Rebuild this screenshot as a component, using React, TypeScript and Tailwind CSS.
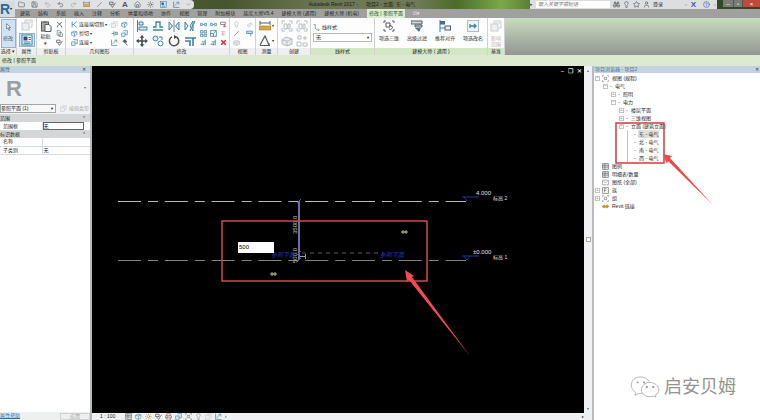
import type { ReactNode } from 'react';
import {
  Binoculars,
  ChevronDown,
  CircleHelp,
  Folder,
  House,
  Lightbulb,
  Printer,
  Redo2,
  Save,
  Star,
  Sun,
  Undo2,
  User,
} from 'lucide-react';

const BLUE = '#3f7fa8';
const DARK = '#555b60';
const PALE = '#c9cccf';

// Ribbon glyphs, all drawn on a 12 x 12 grid
const glyphs: Record<string, ReactNode> = {
  cursor: <path d="M4 1v8l2-2 1.500 4 1.500-.7L7.400 6.800H10z" fill="#fff" stroke={DARK} />,
  props: (
    <>
      <rect x="1" y="1" width="10" height="10" fill="#fff" stroke={BLUE} />
      <rect x="2.500" y="2.500" width="4" height="4" fill="#2d4a66" />
      <path d="M7.500 3.500h2.500M7.500 5.500h2.500M2.500 8h7M2.500 9.700h7" stroke={BLUE} />
    </>
  ),
  type: (
    <>
      <rect x="1" y="4" width="7" height="7" fill="#eceef0" stroke={PALE} />
      <path d="M4 4V1h7v7H8M6 2v2M9 2v2" fill="none" stroke={PALE} />
    </>
  ),
  clipboard: (
    <>
      <rect x="1.500" y="2" width="7" height="9" fill="#a8a89c" stroke={DARK} />
      <rect x="3.500" y="1" width="3" height="2" fill="#777" />
      <path d="M5 4.500h4l2 2v5H5z" fill="#fff" stroke={DARK} />
    </>
  ),
  cut: <path d="M2 2l8 7M10 2L2 9M1.500 10h2M8.500 10h2" fill="none" stroke={DARK} strokeWidth="1.500" />,
  copy: <path d="M2 1h4l2 2v6H2zM5 4h4l2 2v5H5z" fill="#fff" stroke={DARK} />,
  brush: <path d="M1 2h6v4H1zM3 7l3 4 5-8" fill="none" stroke={DARK} strokeWidth="1.300" />,
  cope: <path d="M2 1v10M10 1L4 6l6 5M2 6h3" fill="none" stroke={BLUE} strokeWidth="1.300" />,
  box: <path d="M1 4l4-2 5 1v5l-4 3-5-2zM1 4l5 1 4-2M6 5v6" fill="#eef4f8" stroke={BLUE} />,
  join: <path d="M1 5h6v6H1zM4 1h7v7H7" fill="#dceaf2" stroke={BLUE} />,
  wall: <path d="M1 6h4M5 2v8M7 4h4v4H7z" fill="#d5e6f0" stroke={BLUE} strokeWidth="1.200" />,
  hammer: <path d="M3 4l4-3 3 4-3 1zM6 5l5 6" fill={DARK} stroke={DARK} strokeWidth="1.400" />,
  frame: <path d="M1 1v10h10M3 8l6-6M6 2h4v4" fill="none" stroke={BLUE} strokeWidth="1.200" />,
  align: (
    <>
      <path d="M1.500 0v12" stroke={BLUE} />
      <path d="M3 2h4v3H3zM3 7h8v3H3z" fill="#dcebf4" stroke={BLUE} />
    </>
  ),
  offset: <path d="M1 10h10M1 7h3V2h4v5h3" fill="none" stroke={BLUE} strokeWidth="1.300" />,
  mirror: (
    <>
      <path d="M1 2l3.500 4L1 10zM11 2L7.500 6l3.500 4z" fill="#dcebf4" stroke={BLUE} />
      <path d="M6 0v12" stroke="#5f9a63" />
    </>
  ),
  mirrorDraw: (
    <>
      <path d="M1 2l3 4-3 4zM9 1l-3 5 3 5z" fill="#dcebf4" stroke={BLUE} />
      <path d="M11 1L6 11" stroke="#4c9a86" strokeWidth="1.300" />
    </>
  ),
  move: (
    <path
      d="M6 0l2.300 2.800H6.800v2.400h2.400V3.700L12 6 9.200 8.300V6.800H6.800v2.400h1.500L6 12 3.700 9.200h1.500V6.800H2.800v1.500L0 6l2.800-2.300v1.500h2.400V2.800H3.700z"
      fill="#454b50"
    />
  ),
  copyObj: (
    <>
      <circle cx="3.500" cy="3.500" r="2.500" fill="#dcebf4" stroke={BLUE} />
      <circle cx="8.500" cy="8.500" r="2.500" fill="#fff" stroke={BLUE} />
      <path d="M7 2h3v3" fill="none" stroke={BLUE} />
    </>
  ),
  rotate: (
    <>
      <path d="M8.500 2A4.700 4.700 0 1 1 4 1.800" fill="none" stroke="#454b50" strokeWidth="1.500" />
      <path d="M6 0v4L9.500 2z" fill="#454b50" />
    </>
  ),
  trim: <path d="M1 3h8v8M1 6h5v5M9 3h3" fill="none" stroke={BLUE} strokeWidth="1.600" />,
  split: <path d="M1 4h3v4H1zM8 4h3v4H8zM5 6h2" fill="#fff" stroke={BLUE} strokeWidth="1.300" />,
  array: <path d="M1 1h4v4H1zM7 1h4v4H7zM1 7h4v4H1zM7 7h4v4H7z" fill="#eef5f9" stroke={BLUE} strokeWidth="1.300" />,
  scale: <path d="M1 1h10v10H1zM1 6h5v5M7 5l3-3" fill="#eef5f9" stroke={BLUE} strokeWidth="1.300" />,
  extend: <path d="M1 9h6M7 9L5 7M7 9l-2 2M9 1v10M3 5h6" fill="none" stroke={BLUE} strokeWidth="1.500" />,
  pin: <path d="M1 2h8v4H1zM8 5v6M5 9h6" fill="none" stroke="#87636d" strokeWidth="1.300" />,
  unpin: <path d="M2 3h7M2 7h7M5 2v8" stroke="#c3a3ab" strokeWidth="1.300" />,
  remove: <path d="M2 2l8 8M10 2l-8 8" stroke="#c22f3c" strokeWidth="2.500" />,
  bulb: <path d="M6 1a3.500 3.500 0 0 1 2 6v2H4V7a3.500 3.500 0 0 1 2-6zM4.500 11h3" fill="#f7f7f7" stroke="#b9bcbf" />,
  eraser: <path d="M2 8l5-5 4 2-5 5z" fill="#eceef0" stroke="#b9bcbf" />,
  line: <path d="M2 10l8-8" stroke="#8a9095" strokeWidth="1.500" />,
  linework: <path d="M1 2h10v4H1zM8 6v5" fill="#c6dcea" stroke={BLUE} strokeWidth="1.200" />,
  ruler: (
    <>
      <path d="M1 3h10M1 1v4M11 1v4" stroke={DARK} />
      <rect x="0" y="6" width="12" height="4" fill="#d6a748" stroke="#a67b25" strokeWidth=".6" />
    </>
  ),
  angle: (
    <>
      <path d="M1 10L6 1l4 9" fill="none" stroke={DARK} strokeWidth="1.200" />
      <path d="M1 10.500h10M10 8v3" stroke={DARK} />
    </>
  ),
  group: <path d="M1 1h3M1 1v3M8 1h3v3M1 8v3h3M11 8v3H8M3 4h3v5H3zM7 4h2v5H7z" fill="none" stroke="#b8bcc0" />,
  solid: <path d="M1 5l4-3 6 2v5l-5 2-5-2zM1 5l5 1 5-2M6 6v5" fill="#e6e7e8" stroke="#b8bcc0" />,
  similar: <path d="M2 1h3v3H2zM7 3h4M9 1v4M1 7h4v4H1zM7 8h4v3H7z" fill="none" stroke="#b8bcc0" />,
  lineStyle: <path d="M1 1h3v6c0 2 2 3 4 3M8 8l3 2-3 2" fill="none" stroke={DARK} />,
  swap3d: <path d="M1 3V1h2M9 1h2v2M11 9v2H9M3 11H1V9M3 3h4v4H3zM6 6a2 2 0 1 1 0 3" fill="#fff" stroke={DARK} />,
  filter: (
    <>
      <path d="M0 1h11v3H0zM4 5h7v2H4z" fill="#cfdbe2" stroke={DARK} />
      <path d="M4 8h6l-2 4z" fill={BLUE} />
    </>
  ),
  arrange: (
    <>
      <path d="M1 0v12M1 8h5" stroke={BLUE} />
      <rect x="1" y="1" width="5" height="3.500" fill="#3a6ea5" />
      <rect x="6" y="6" width="5.500" height="4" fill="#e9eef2" stroke={DARK} />
    </>
  ),
  modify: (
    <>
      <rect x=".500" y=".500" width="11" height="11" fill="#eef3f6" stroke="#a9c0cf" />
      <path d="M3 6h6M7 4l2 2-2 2M3 4v4" fill="none" stroke={BLUE} strokeWidth="1.300" />
    </>
  ),
  view: <path d="M1 3V1h2M9 1h2v2M11 9v2H9M3 11H1V9M4 4h4v4H4z" fill="none" stroke="#666" />,
  sheet: <path d="M1 1h10v10H1zM1 4h10M1 7h10M5 1v10" fill="#e7edf0" stroke="#555" />,
  paper: <path d="M1 2h10v8H1zM3 4l3 3 3-3" fill="#fff" stroke="#777" />,
  family: <path d="M1 1h10v10H1zM4 9V3h4M4 6h3" fill="#fff" stroke="#555" />,
  link: <path d="M0 6h12M2 4h3v4H2zM7 4h3v4H7z" fill="#f0c43b" stroke="#c58a10" strokeWidth="1.300" />,
};

const sizes = { 7: 'size-[7px]', 8: 'size-2', 12: 'size-3' };

function Glyph({ name, size = 7 }: { name: string; size?: 7 | 8 | 12 }) {
  return (
    <svg viewBox="0 0 12 12" fill="none" className={`${sizes[size]} shrink-0`} aria-hidden="true">
      {glyphs[name]}
    </svg>
  );
}

function IconButton({ name, size = 7 }: { name: string; size?: 7 | 8 | 12 }) {
  return (
    <button type="button" aria-label={name} className="flex items-center justify-center">
      <Glyph name={name} size={size} />
    </button>
  );
}

function Panel({
  title,
  width,
  green = false,
  children,
}: {
  title: string;
  width: string;
  green?: boolean;
  children: ReactNode;
}) {
  return (
    <section className={`flex shrink-0 flex-col border-r border-[#d0d3d0] bg-[#fcfdfc] ${width}`}>
      <div className="flex flex-1 items-center justify-center">{children}</div>
      <h2 className={`h-[7px] text-center leading-[7px] ${green ? 'bg-[#d2e8c4]' : 'bg-[#eeefee]'}`}>{title}</h2>
    </section>
  );
}

function BigButton({ name, label, disabled = false }: { name: string; label: string; disabled?: boolean }) {
  return (
    <button type="button" disabled={disabled} className="flex flex-col items-center gap-[3px] disabled:text-[#b5b5b5]">
      <Glyph name={name} size={12} />
      <span className="leading-[6px]">{label}</span>
    </button>
  );
}

const tabs = [
  '建筑', '结构', '系统', '插入', '注释', '分析', '体量和场地', '协作', '视图', '管理',
  '附加模块', '族库大师V5.4', '建模大师 (通用)', '建模大师 (机电)',
];

function TitleBar() {
  return (
    <header className="flex h-[9px] items-center bg-[linear-gradient(90deg,#4d5c38_0%,#48562f_30%,#6c7554_42%,#707958_55%,#4c6b2b_60%,#7aa94a_66%,#3c5c22_73%,#314527_100%)]">
      <div className="flex h-[9px] w-[194px] shrink-0 items-center gap-[6px] rounded-r bg-[#dfe1e3] pl-[18px] text-[#4f5960]">
        <Folder className="size-[7px]" />
        <Save className="size-[7px]" />
        <Undo2 className="size-[7px] text-[#9fa5aa]" />
        <Undo2 className="size-[7px]" />
        <Redo2 className="size-[7px] text-[#9fa5aa]" />
        <Glyph name="ruler" />
        <Glyph name="line" />
        <Glyph name="brush" />
        <span className="text-[8px] font-bold leading-[9px]">A</span>
        <House className="size-[7px]" />
        <Sun className="size-[7px]" />
        <Glyph name="props" />
        <Glyph name="frame" />
        <ChevronDown className="size-[5px]" />
      </div>
      <h1 className="flex flex-1 justify-center gap-2 whitespace-nowrap text-[5px] leading-[9px] text-[#15190f]">
        <span>Autodesk Revit 2017 -</span>
        <span>项目2 - 立面: 东 - 电气</span>
      </h1>
      <div className="flex h-[9px] w-[187px] shrink-0 items-center gap-[3px] bg-[#dcdee0] text-[#4b5057]">
        <span className="text-[5px] leading-[9px]">▸</span>
        <input
          aria-label="搜索"
          placeholder="键入关键字或短语"
          className="h-[7px] w-[74px] shrink-0 bg-white px-0.5 text-[5px] italic placeholder:text-[#6f747a]"
        />
        <Binoculars className="size-[7px] shrink-0" />
        <Lightbulb className="size-[7px] shrink-0" />
        <Star className="size-[7px] shrink-0" />
        <User className="size-[7px] shrink-0" />
        <button type="button" className="shrink-0 text-[5px] leading-[9px] whitespace-nowrap text-[#222]">登录</button>
        <ChevronDown className="ml-auto size-[4px] shrink-0" />
        <span className="text-[8px] font-bold leading-[9px] text-[#4258a0]">X</span>
        <CircleHelp className="ml-1 size-[7px] shrink-0 text-[#3b5da8]" />
        <ChevronDown className="size-[4px] shrink-0" />
      </div>
      <div className="ml-1.5 flex h-[7px] w-[37px] shrink-0 self-start rounded-b-sm text-[6px] leading-[6px] text-white">
        <button type="button" className="w-[10px] bg-[#777f74]" aria-label="最小化">–</button>
        <button type="button" className="w-[10px] border-x border-[#4e5849] bg-[#777f74]" aria-label="还原">▫</button>
        <button type="button" className="flex-1 bg-[#c1493b]" aria-label="关闭">×</button>
      </div>
    </header>
  );
}

function Ribbon() {
  return (
    <div className="flex h-[37px] bg-[linear-gradient(180deg,#c9dcbf,#a9b5a5_55%,#959795)]">
      <Panel title="选择 ▾" width="w-[17px]">
        <button
          type="button"
          className="flex h-[29px] w-[15px] flex-col items-center justify-center gap-1 border border-[#8eb4d3] bg-[#cfe3f3] text-[#2f5674]"
        >
          <Glyph name="cursor" size={8} />
          修改
        </button>
      </Panel>
      <Panel title="属性" width="w-[20px]">
        <div className="flex flex-col items-center gap-0.5">
          <IconButton name="type" size={12} />
          <span className="flex border border-[#8eb4d3] bg-[#cfe3f3] px-px">
            <IconButton name="props" size={12} />
          </span>
        </div>
      </Panel>
      <Panel title="剪贴板" width="w-[29px]">
        <div className="flex items-center gap-1">
          <button type="button" className="flex flex-col items-center gap-0.5 leading-[5px]">
            <Glyph name="clipboard" size={12} />
            粘贴
            <span>▾</span>
          </button>
          <div className="flex flex-col gap-[2px]">
            <IconButton name="cut" />
            <IconButton name="copy" />
            <IconButton name="brush" />
          </div>
        </div>
      </Panel>
      <Panel title="几何图形" width="w-[68px]">
        <div className="flex items-center gap-1">
          <div className="flex flex-col gap-[2px]">
            {[
              ['cope', '连接端切割'],
              ['box', '剪切'],
              ['join', '连接'],
            ].map(([name, label]) => (
              <button key={name} type="button" className="flex items-center gap-px leading-[7px]">
                <Glyph name={name} />
                <span>{label}</span>
                <span className="text-[4px]">▾</span>
              </button>
            ))}
          </div>
          <div className="grid grid-cols-2 gap-x-[3px] gap-y-[2px]">
            {['type', 'box', 'wall', 'join', 'frame', 'hammer'].map((name) => (
              <IconButton key={name} name={name} />
            ))}
          </div>
        </div>
      </Panel>
      <Panel title="修改" width="w-[96px]">
        <div className="flex items-center gap-1">
          <div className="grid grid-cols-4 gap-x-[4px] gap-y-[3px]">
            {['align', 'offset', 'mirror', 'mirrorDraw', 'move', 'copyObj', 'rotate', 'trim'].map((name) => (
              <IconButton key={name} name={name} size={12} />
            ))}
          </div>
          <div className="grid grid-cols-3 gap-x-[3px] gap-y-[2px]">
            {['split', 'split', 'pin', 'array', 'scale', 'unpin', 'extend', 'extend', 'remove'].map((name, i) => (
              <IconButton key={i} name={name} />
            ))}
          </div>
        </div>
      </Panel>
      <Panel title="视图" width="w-[26px]">
        <div className="grid grid-cols-2 gap-x-[6px] gap-y-[2px]">
          {['bulb', 'eraser', 'line', 'linework', 'solid'].map((name) => (
            <IconButton key={name} name={name} />
          ))}
        </div>
      </Panel>
      <Panel title="测量" width="w-[22px]">
        <div className="flex flex-col gap-[3px] text-[4px]">
          <button type="button" className="flex items-center gap-px"><Glyph name="ruler" size={12} />▾</button>
          <button type="button" className="flex items-center gap-px"><Glyph name="angle" size={12} />▾</button>
        </div>
      </Panel>
      <Panel title="创建" width="w-[33px]">
        <div className="grid grid-cols-2 gap-[3px]">
          {['group', 'group', 'solid', 'similar'].map((name, i) => (
            <IconButton key={i} name={name} size={12} />
          ))}
        </div>
      </Panel>
      <Panel title="线样式" width="w-[64px]" green>
        <label className="flex w-full flex-col gap-0.5 px-[2px]">
          <span className="flex items-center gap-0.5"><Glyph name="lineStyle" />线样式:</span>
          <span className="relative flex">
            <select className="h-[9px] w-full appearance-none border border-[#b6bab6] bg-white pl-0.5 text-[5px] leading-[7px]">
              <option>无</option>
            </select>
            <span className="pointer-events-none absolute right-0.5 text-[4px] leading-[9px]">▼</span>
          </span>
        </label>
      </Panel>
      <Panel title="建模大师 ( 通用 )" width="w-[113px]" green>
        <div className="mb-1.5 flex gap-2">
          <BigButton name="swap3d" label="项选三维" />
          <BigButton name="filter" label="高级过滤" />
          <BigButton name="arrange" label="推荐对齐" />
          <BigButton name="modify" label="项选改名" />
        </div>
      </Panel>
      <Panel title="基准" width="w-[17px]" green>
        <div className="flex flex-col items-center text-[#b5b5b5]">
          <BigButton name="type" label="影响" disabled />
          <span className="leading-[6px]">范围</span>
        </div>
      </Panel>
    </div>
  );
}

function Properties() {
  return (
    <aside className="flex w-[90px] shrink-0 flex-col bg-white">
      <h2 className="flex h-[7px] items-center justify-between bg-[#c3d3e3] pr-1 leading-[7px] text-[#49657f]">
        属性<button type="button" className="text-[#333]" aria-label="关闭属性">✕</button>
      </h2>
      <div className="flex h-[30px] items-center justify-between bg-[#f1f2f3] pr-1 pl-[6px]">
        <span className="font-['Liberation_Sans'] text-[22px] font-bold text-[#9c9fa1]">R</span>
        <span className="text-[4px] text-[#777]">▾</span>
      </div>
      <div className="flex h-[11px] items-center gap-1 bg-[#f1f2f3]">
        <span className="relative flex w-[56px]">
          <select aria-label="类型" className="h-[9px] w-full appearance-none border border-[#a3a6a8] bg-[#f7f7f7] text-[5px] leading-[7px]">
            <option>参照平面 (1)</option>
          </select>
          <span className="pointer-events-none absolute right-0.5 text-[4px] leading-[9px]">▼</span>
        </span>
        <button type="button" disabled className="flex items-center gap-0.5 text-[#a9abad]">
          <Glyph name="type" />编辑类型
        </button>
      </div>
      <table className="w-full table-fixed leading-[7px]">
        <tbody>
          <tr className="h-2 bg-[#d4d6d7]">
            <th className="w-[42px] text-left font-normal">范围</th>
            <td className="pr-1 text-right">⌃</td>
          </tr>
          <tr className="h-2">
            <th className="border-r border-[#d8dadb] pl-[3px] text-left font-normal">范围框</th>
            <td className="pr-1.5">
              <input aria-label="范围框" defaultValue="无" className="block h-2 w-full px-px text-[5px] leading-[8px] outline outline-[#666] -outline-offset-1" />
            </td>
          </tr>
          <tr className="h-2 bg-[#d4d6d7]">
            <th className="text-left font-normal">标识数据</th>
            <td className="pr-1 text-right">⌃</td>
          </tr>
          <tr className="h-2 border-b border-[#d8dadb]">
            <th className="border-r border-[#d8dadb] pl-[3px] text-left font-normal">名称</th>
            <td />
          </tr>
          <tr className="h-2 border-b border-[#d8dadb]">
            <th className="border-r border-[#d8dadb] pl-[3px] text-left font-normal">子类别</th>
            <td className="pl-px">无</td>
          </tr>
        </tbody>
      </table>
      <div className="mt-auto flex h-2 items-center justify-between bg-[#eeefef]">
        <a href="#help" className="text-[#2a6c9c] underline">属性帮助</a>
        <button type="button" disabled className="h-[7px] w-[30px] border border-[#cfd1d2] leading-[5px] text-[#9c9ea0]">应用</button>
      </div>
    </aside>
  );
}

// Elevation view: two level lines, the dimension string and the reference plane being placed
function Elevation() {
  return (
    <div className="relative min-h-0 flex-1 overflow-hidden bg-black">
      <svg width="492" height="346" viewBox="0 0 492 346" className="absolute top-0 left-0" fontFamily="'Liberation Sans', 'Noto Sans CJK SC', sans-serif">
        <path d="M26 135.500H374" stroke="#b9b9b9" strokeDasharray="23 7 10 6.800" />
        <path d="M26 194.500H374" stroke="#808080" strokeDasharray="23 7 10 6.800" />
        <path d="M207 135V194" stroke="#9396dc" strokeWidth="1.500" />
        <path d="M205 137l4-4M205 189l4-4M205 196l4-4" stroke="#4550b5" />
        <path d="M210 187H291" stroke="#5a5a5a" strokeDasharray="4 4" />
        <path d="M208 190.500h6M213.500 188v5" stroke="#999" />
        <g fill="#c4c0a6" fontSize="6">
          <text transform="translate(205 168) rotate(-90)">3500.0</text>
          <text transform="translate(205 197) rotate(-90)">500.0</text>
        </g>
        <g fill="#2438b4" fontSize="6" fontStyle="italic">
          <text x="179" y="191">参照平面</text>
          <text x="288" y="191">参照平面</text>
        </g>
        <path d="M370 131h17M372 131l3 4M370 190h17M372 190l3 4 3-4" stroke="#27349c" fill="none" />
        <g fill="#e0e0e0" fontSize="6">
          <text x="384" y="129">4.000</text>
          <text x="381" y="188">±0.000</text>
          <text x="401" y="134" fontSize="5">标高 2</text>
          <text x="401" y="193" fontSize="5">标高 1</text>
        </g>
        <path
          d="M310 165h2v2h-2zM313 165h2v2h-2zM179 207h2v2h-2zM182 207h2v2h-2z"
          stroke="#b9b69c"
          fill="none"
        />
        <rect x="130" y="155" width="205" height="60" fill="none" stroke="#d8474c" strokeWidth="1.500" />
        <path d="M313 204l9 6-2 1 58 79-61-76-2 2z" fill="#ee4d4f" />
      </svg>
      <input
        aria-label="尺寸值"
        defaultValue="500"
        className="absolute top-[176px] left-[146px] h-[11px] w-9 bg-white px-px pb-[2px] text-[6px] leading-[8px] text-black"
      />
      <div className="absolute top-[2px] right-[2px] flex gap-1 text-[6px] leading-[7px] font-bold text-[#ddd]">
        <button type="button" aria-label="最小化视图">–</button>
        <button type="button" aria-label="还原视图">❐</button>
        <button type="button" aria-label="关闭视图">✕</button>
      </div>
    </div>
  );
}

function ViewArea() {
  return (
    <main className="flex min-w-0 flex-1 flex-col border-l-2 border-[#b5b9bc]">
      <div className="flex min-h-0 flex-1">
        <Elevation />
        <div className="flex w-2 flex-col items-center justify-between bg-[#f0f1f2] py-0.5 text-[4px] leading-[5px] text-[#666]">
          <span>▴</span>
          <span className="h-[5px] w-[5px] border border-[#aaa] bg-white" />
          <span>▾</span>
        </div>
      </div>
      <div className="flex h-[7px] items-center gap-[3px] bg-[#eff0f1] pl-2 leading-[7px]">
        <span className="w-[22px]">1 : 100</span>
        <IconButton name="sheet" />
        <IconButton name="box" />
        <Sun className="size-[7px] text-[#c58a2c]" />
        <IconButton name="brush" />
        <Printer className="size-[7px] text-[#8b4f4f]" />
        <IconButton name="join" />
        <IconButton name="view" />
        <Lightbulb className="size-[7px] text-[#888]" />
        <IconButton name="type" />
        <IconButton name="frame" />
        <span>‹</span>
        <span className="ml-auto pr-2 text-[4px]">▸</span>
      </div>
    </main>
  );
}

const tree = [
  { label: '视图 (规程)', depth: 0, mark: '−', icon: 'view' },
  { label: '电气', depth: 1, mark: '−' },
  { label: '照明', depth: 2, mark: '+' },
  { label: '电力', depth: 2, mark: '−' },
  { label: '楼层平面', depth: 3, mark: '+' },
  { label: '三维视图', depth: 3, mark: '+' },
  { label: '立面 (建筑立面)', depth: 3, mark: '−' },
  { label: '东 - 电气', depth: 4, selected: true },
  { label: '北 - 电气', depth: 4 },
  { label: '南 - 电气', depth: 4 },
  { label: '西 - 电气', depth: 4 },
  { label: '图例', depth: 0, icon: 'sheet' },
  { label: '明细表/数量', depth: 0, icon: 'sheet' },
  { label: '图纸 (全部)', depth: 0, icon: 'paper' },
  { label: '族', depth: 0, mark: '+', icon: 'family' },
  { label: '组', depth: 0, mark: '+', icon: 'view' },
  { label: 'Revit 链接', depth: 0, icon: 'link' },
];

const indents = ['pl-px', 'pl-[9px]', 'pl-[17px]', 'pl-[25px]', 'pl-[33px]'];

function ProjectBrowser() {
  return (
    <aside className="relative flex w-[168px] shrink-0 flex-col border-l-2 border-[#b8bcc0] bg-white">
      <h2 className="flex h-[7px] justify-between bg-[#c3d3e3] px-px leading-[7px] text-[#597087]">
        项目浏览器 - 项目2<button type="button" className="text-[#333]" aria-label="关闭浏览器">✕</button>
      </h2>
      <ul className="pt-px">
        {tree.map((node) => (
          <li key={node.label} className={`flex h-2 items-center gap-[2px] leading-[8px] ${indents[node.depth]}`}>
            {node.mark ? (
              <button
                type="button"
                aria-label={`展开 ${node.label}`}
                className="flex size-[5px] items-center justify-center border border-[#c2c4c6] text-[4px]"
              >
                {node.mark}
              </button>
            ) : (
              <span className={`w-[5px] ${node.depth === 4 ? 'h-full border-l border-[#c2c4c6]' : ''}`} />
            )}
            {node.icon ? <Glyph name={node.icon} /> : <span className="w-0.5 border-t border-[#c2c4c6]" />}
            <span className={node.selected ? 'bg-[#dedede] px-px' : 'px-px'}>{node.label}</span>
          </li>
        ))}
      </ul>
      <svg width="130" height="150" viewBox="0 0 130 150" className="pointer-events-none absolute top-0 left-0">
        <rect x="22" y="57" width="48" height="40" fill="none" stroke="#d6383e" strokeWidth="1.500" />
        <path d="M69 88l9 2-2 2 43 47-45-44-1 3z" fill="#e94a4c" />
      </svg>
      <div className="absolute right-6 bottom-[22px] flex items-center gap-1 text-[18px] leading-[20px] text-[#949494]">
        <svg viewBox="0 0 32 24" className="h-[22px] w-[30px]" fill="#fff" stroke="#b0b0b0">
          <path d="M6 18l-1 3 4-2c8 1 14-4 13-10C21 4 16 1 11 1 5 1 1 5 1 10c0 3 2 6 5 8z" />
          <path d="M27 21l1 2-3-1c-7 2-13-2-13-7 0-4 4-8 9-8 6 0 10 4 10 8 0 2-1 5-4 6z" />
          <path d="M7 7h2M14 7h2M17 12h2M24 12h2" strokeWidth="2" stroke="#999" />
        </svg>
        启安贝姆
      </div>
    </aside>
  );
}

export default function App() {
  return (
    <div className="flex h-screen flex-col overflow-hidden bg-[#e4e6e7] font-['Liberation_Sans','Noto_Sans_CJK_SC',sans-serif] text-[5px] text-[#26292b]">
      <div className="relative">
        <TitleBar />
        <nav className="flex h-[9px] items-end gap-2 bg-[#a0a19f] pl-5 leading-[9px] whitespace-nowrap">
          {tabs.map((tab) => (
            <button key={tab} type="button">{tab}</button>
          ))}
          <button type="button" className="bg-[#d9eed0] px-[2px] text-[#1f4d2c]">修改 | 参照平面</button>
          <button type="button" aria-label="最小化功能区" className="text-[#eee]">⊡▾</button>
        </nav>
        <button
          type="button"
          aria-label="应用程序菜单"
          className="absolute top-px left-0 flex h-4 w-[15px] items-center bg-[#d4dce2] text-[14px] leading-4 font-bold text-[#2d6796]"
        >
          R<span className="text-[4px] text-[#333]">▾</span>
        </button>
      </div>
      <Ribbon />
      <div className="h-[11px] bg-[#dcead2] pl-[2px] leading-[11px]">修改 | 参照平面</div>
      <div className="flex min-h-0 flex-1">
        <Properties />
        <ViewArea />
        <ProjectBrowser />
      </div>
    </div>
  );
}
